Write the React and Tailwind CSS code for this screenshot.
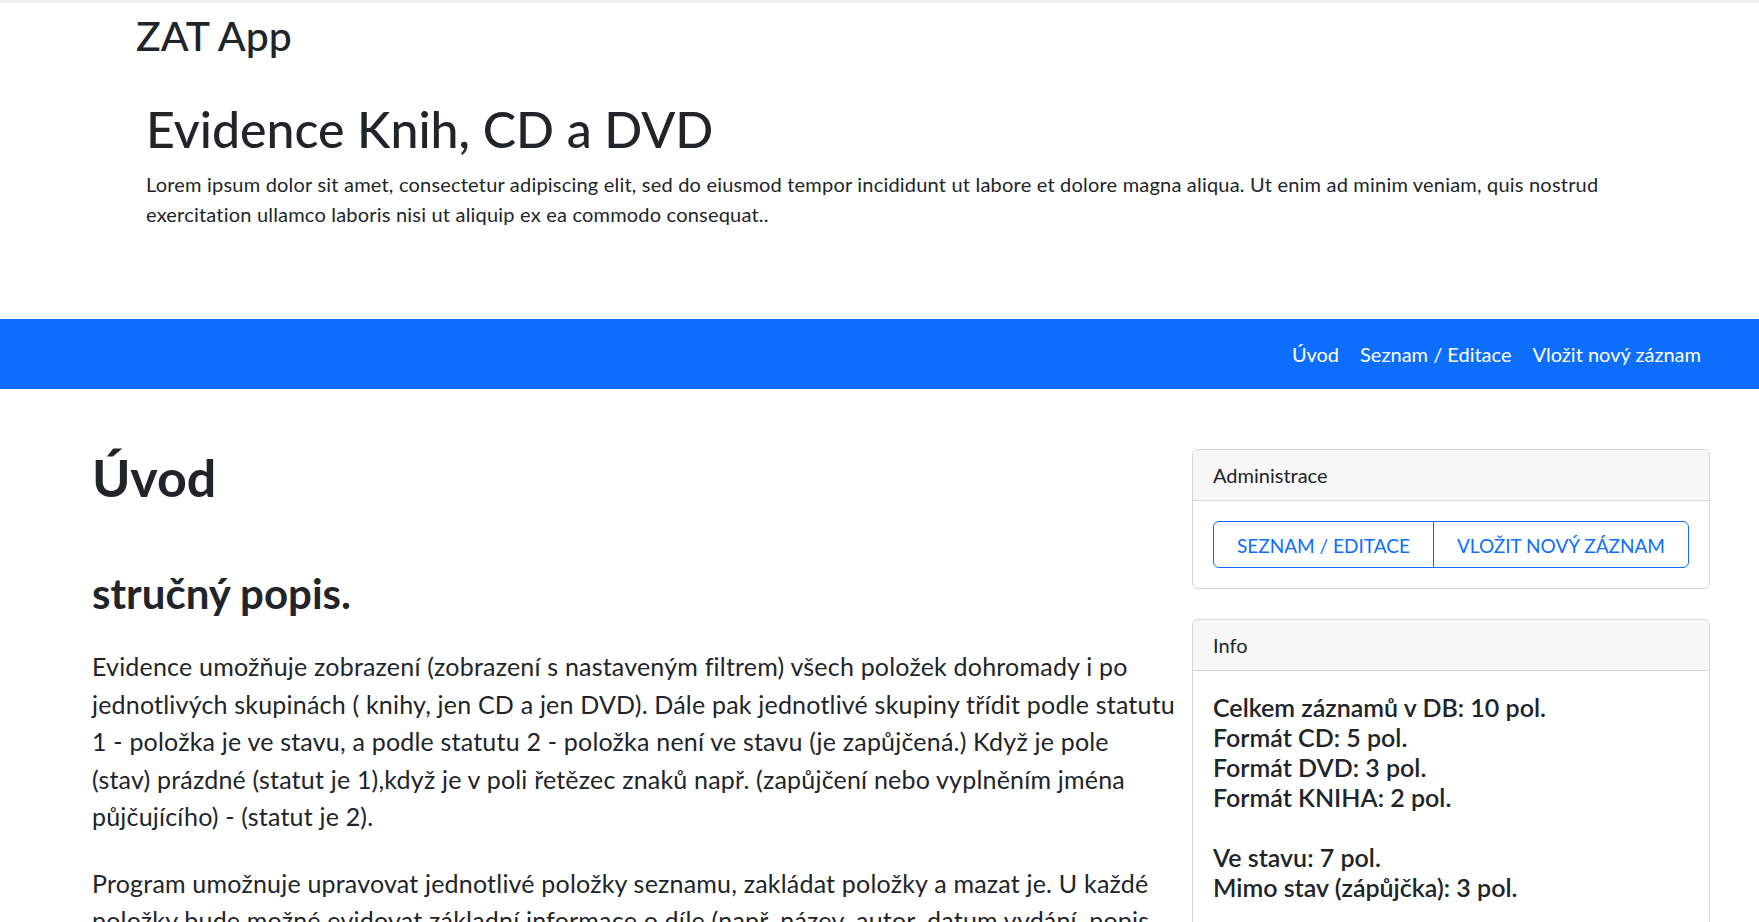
import React from 'react';

const NAV = ['Úvod', 'Seznam / Editace', 'Vložit nový záznam'];

const STATS = [
  'Celkem záznamů v DB: 10 pol.',
  'Formát CD: 5 pol.',
  'Formát DVD: 3 pol.',
  'Formát KNIHA: 2 pol.',
  null,
  'Ve stavu: 7 pol.',
  'Mimo stav (zápůjčka): 3 pol.',
];

const Card = ({ title, children, bodyClass = '' }) => (
  <div className="rounded-[6px] border border-[#d6d6d6] bg-white">
    <div className="rounded-t-[6px] border-b border-[#d6d6d6] bg-[#f7f7f7] px-[20px] py-[10px] text-[20px] leading-[30px]">
      {title}
    </div>
    <div className={`p-[20px] ${bodyClass}`}>{children}</div>
  </div>
);

export default function App() {
  return (
    <div className="min-h-screen border-t-[3px] border-[#efefef] bg-white font-['Lato','Segoe_UI',sans-serif] text-[#212529]">
      <header className="pl-[136px] pt-[9px]">
        <h1 className="text-[41px] font-medium leading-[48px]">ZAT App</h1>
      </header>

      <section className="pl-[146px] pr-[150px] pt-[39px] pb-[90px]">
        <h2 className="mb-[9px] text-[50px] font-medium leading-[61px]">Evidence Knih, CD a DVD</h2>
        <p className="text-[20px] leading-[30px] tracking-[0.2px]">
          Lorem ipsum dolor sit amet, consectetur adipiscing elit, sed do eiusmod tempor incididunt ut labore et dolore magna aliqua. Ut enim ad minim veniam, quis nostrud exercitation ullamco laboris nisi ut aliquip ex ea commodo consequat..
        </p>
      </section>

      <nav className="flex h-[70px] items-center justify-end gap-[21px] bg-[#0d6efd] pr-[58px] text-[20px] leading-[30px] text-white">
        {NAV.map((item) => (
          <a key={item} href="#" className="hover:text-white/80">{item}</a>
        ))}
      </nav>

      <main className="flex gap-[8px] pl-[92px] pt-[57px]">
        <div className="w-[1092px] shrink-0">
          <h1 className="text-[52px] font-bold leading-[62px]">Úvod</h1>
          <h2 className="mt-[60px] text-[42px] font-bold leading-[50px]">stručný popis.</h2>
          <p className="mt-[30px] text-[25px] leading-[37.5px] tracking-[0.2px]">
            Evidence umožňuje zobrazení (zobrazení s nastaveným filtrem) všech položek dohromady i po jednotlivých skupinách ( knihy, jen CD a jen DVD). Dále pak jednotlivé skupiny třídit podle statutu 1 - položka je ve stavu, a podle statutu 2 - položka není ve stavu (je zapůjčená.) Když je pole (stav)&nbsp;prázdné (statut je 1),když je v poli řetězec znaků např. (zapůjčení nebo vyplněním jména půjčujícího) - (statut je 2).
          </p>
          <p className="mt-[29px] text-[25px] leading-[37.5px] tracking-[0.2px]">
            Program umožnuje upravovat jednotlivé položky seznamu, zakládat položky a mazat je. U každé položky bude možné evidovat základní informace o díle (např. název, autor, datum vydání, popis, formát a stav).
          </p>
        </div>

        <aside className="mt-[3px] flex w-[518px] shrink-0 flex-col gap-[30px]">
          <Card title="Administrace">
            <div className="flex h-[47px] rounded-[6px] border border-[#0d6efd] text-[19px] text-[#0d6efd]">
              <button type="button" className="flex flex-auto items-center justify-center whitespace-nowrap px-[20px] pt-[3px] uppercase">Seznam / Editace</button>
              <button type="button" className="flex flex-auto items-center justify-center whitespace-nowrap border-l border-[#0d6efd] px-[20px] pt-[3px] uppercase">Vložit nový záznam</button>
            </div>
          </Card>
          <Card title="Info" bodyClass="pt-[21px] pb-[60px]">
            <div className="text-[25px] font-semibold leading-[30px]">
              {STATS.map((line, i) => (line ? <div key={i}>{line}</div> : <div key={i} className="h-[30px]" />))}
            </div>
          </Card>
        </aside>
      </main>
    </div>
  );
}
